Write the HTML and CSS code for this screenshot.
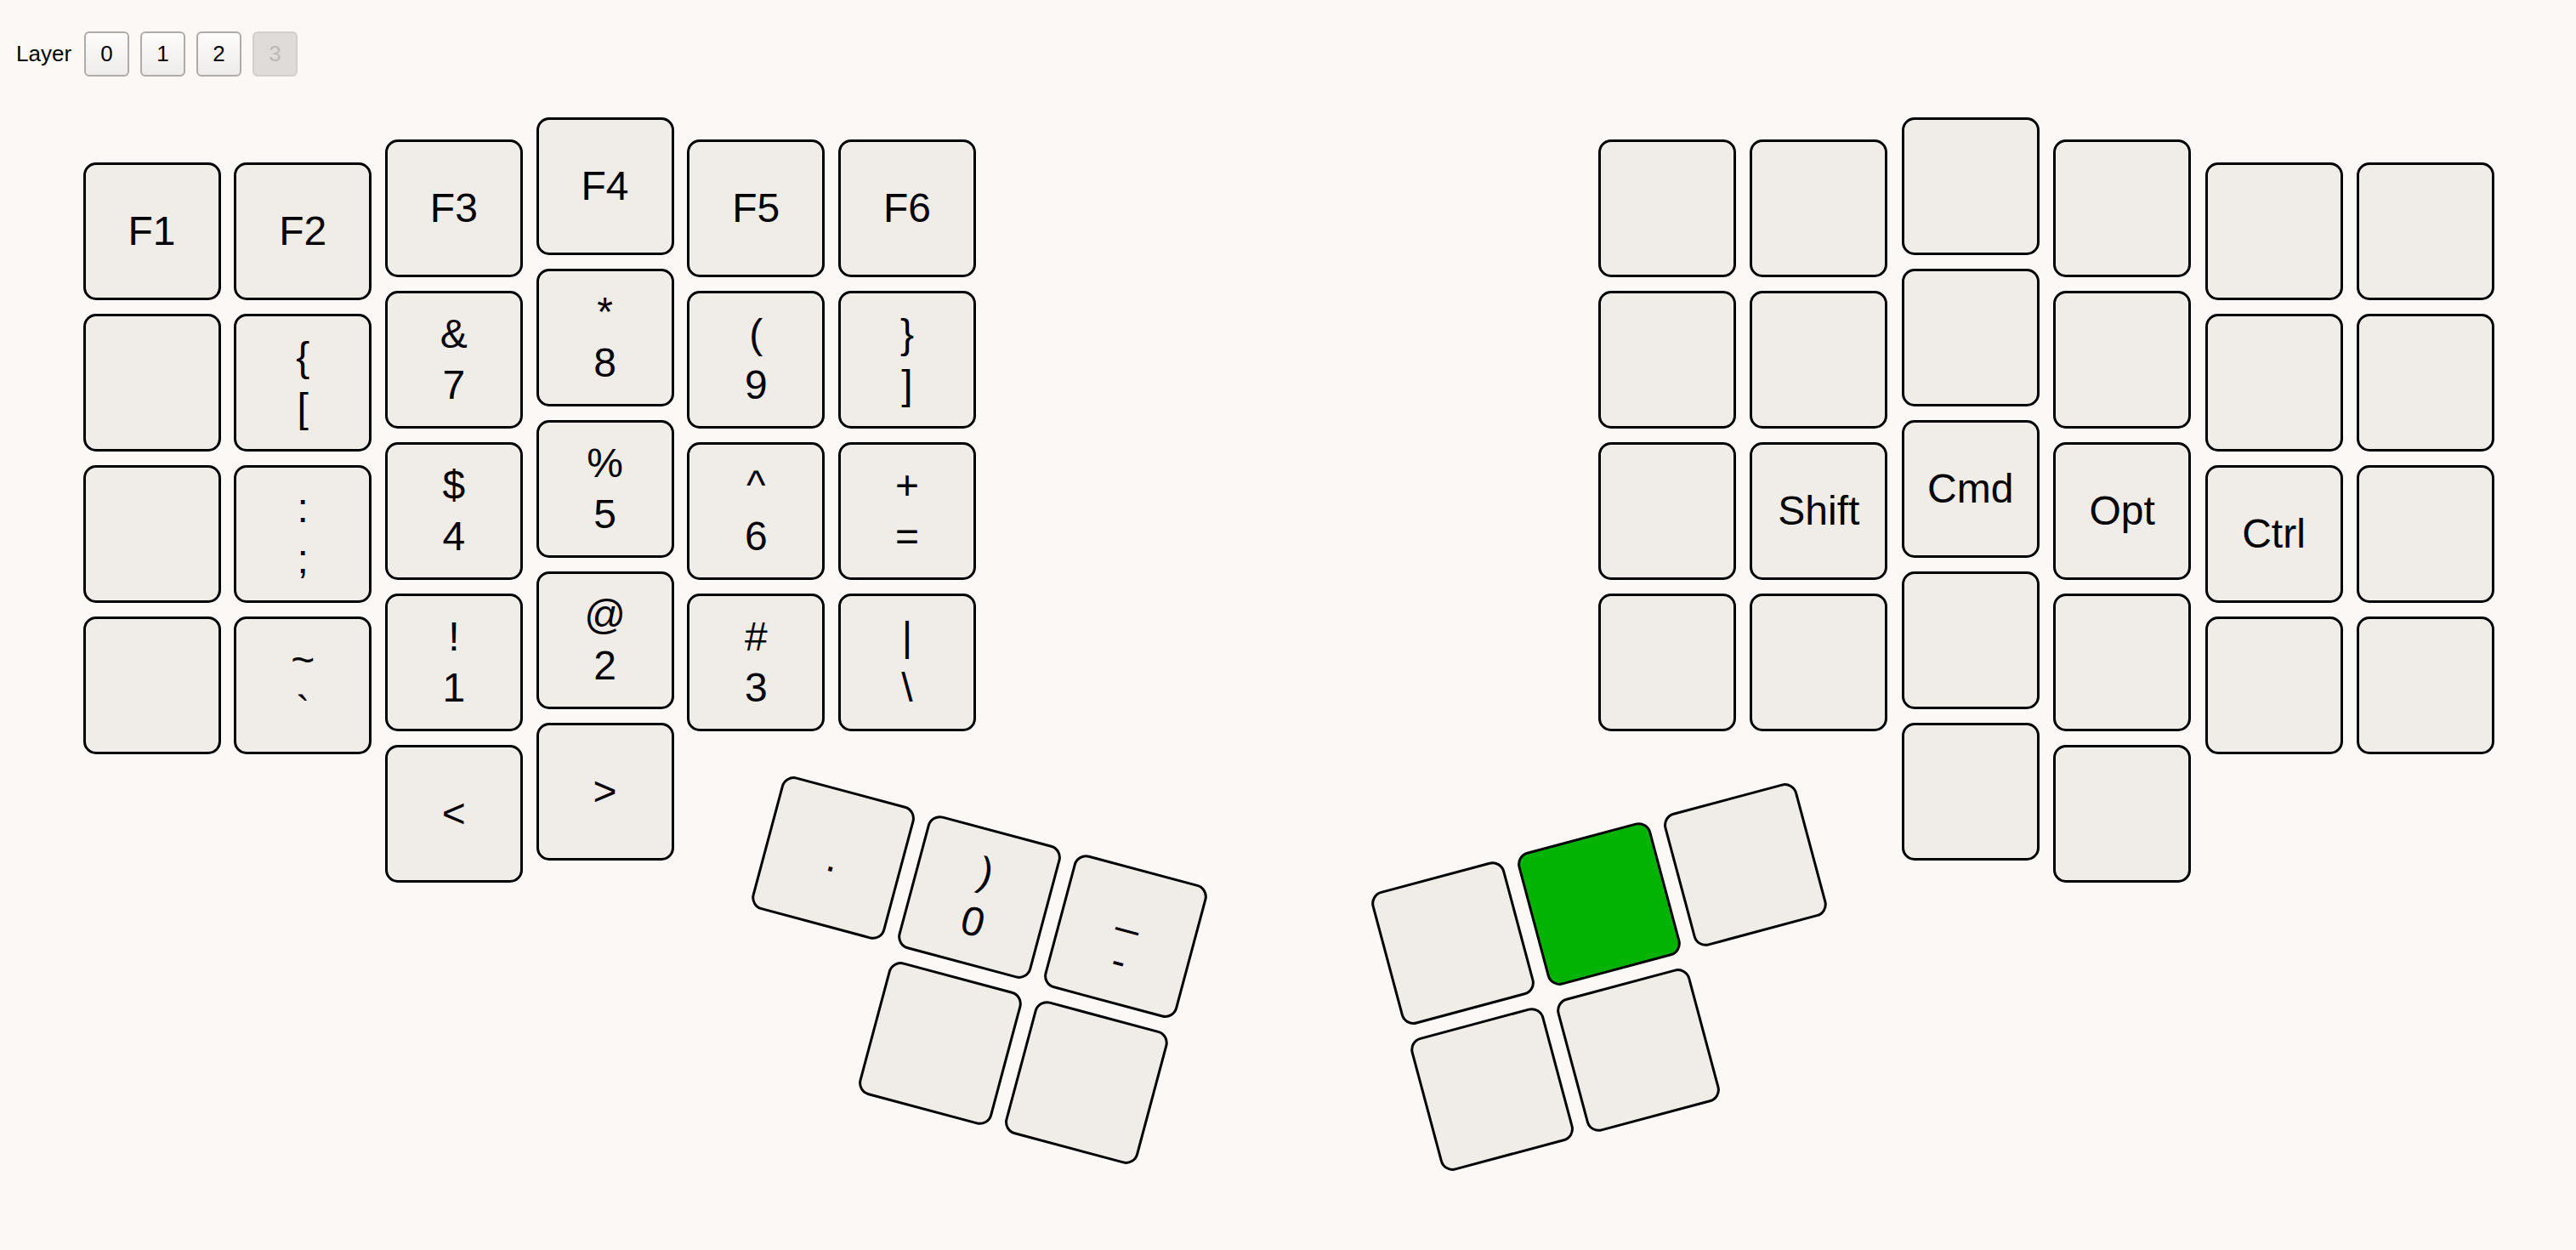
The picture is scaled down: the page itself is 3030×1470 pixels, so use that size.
FILE: index.html
```html
<!DOCTYPE html>
<html lang="en">
    <head>
        <meta charset="UTF-8" />
        <meta name="viewport" content="width=device-width, initial-scale=1.0" />
        <title>Keymap</title>
        <link rel="stylesheet" href="styles.css">
    </head>
    <body>
        <div class="toolbar">
            <span class="toolbar-label">Layer</span>
            <button class="layer-btn">0</button>
            <button class="layer-btn">1</button>
            <button class="layer-btn">2</button>
            <button class="layer-btn" disabled>3</button>
        </div>

        <div class="board">
            <!-- left half -->
            <div class="half">
                <div class="col low">
                    <div class="key"><span>F1</span></div>
                    <div class="key"></div>
                    <div class="key"></div>
                    <div class="key"></div>
                </div>
                <div class="col low">
                    <div class="key"><span>F2</span></div>
                    <div class="key"><span>{</span><span>[</span></div>
                    <div class="key"><span>:</span><span>;</span></div>
                    <div class="key"><span>~</span><span>`</span></div>
                </div>
                <div class="col mid">
                    <div class="key"><span>F3</span></div>
                    <div class="key"><span>&amp;</span><span>7</span></div>
                    <div class="key"><span>$</span><span>4</span></div>
                    <div class="key"><span>!</span><span>1</span></div>
                    <div class="key"><span>&lt;</span></div>
                </div>
                <div class="col">
                    <div class="key"><span>F4</span></div>
                    <div class="key"><span>*</span><span>8</span></div>
                    <div class="key"><span>%</span><span>5</span></div>
                    <div class="key"><span>@</span><span>2</span></div>
                    <div class="key"><span>&gt;</span></div>
                </div>
                <div class="col mid">
                    <div class="key"><span>F5</span></div>
                    <div class="key"><span>(</span><span>9</span></div>
                    <div class="key"><span>^</span><span>6</span></div>
                    <div class="key"><span>#</span><span>3</span></div>
                </div>
                <div class="col mid">
                    <div class="key"><span>F6</span></div>
                    <div class="key"><span>}</span><span>]</span></div>
                    <div class="key"><span>+</span><span>=</span></div>
                    <div class="key"><span>|</span><span>\</span></div>
                </div>
            </div>

            <!-- right half -->
            <div class="half half-right">
                <div class="col mid">
                    <div class="key"></div>
                    <div class="key"></div>
                    <div class="key"></div>
                    <div class="key"></div>
                </div>
                <div class="col mid">
                    <div class="key"></div>
                    <div class="key"></div>
                    <div class="key"><span>Shift</span></div>
                    <div class="key"></div>
                </div>
                <div class="col">
                    <div class="key"></div>
                    <div class="key"></div>
                    <div class="key"><span>Cmd</span></div>
                    <div class="key"></div>
                    <div class="key"></div>
                </div>
                <div class="col mid">
                    <div class="key"></div>
                    <div class="key"></div>
                    <div class="key"><span>Opt</span></div>
                    <div class="key"></div>
                    <div class="key"></div>
                </div>
                <div class="col low">
                    <div class="key"></div>
                    <div class="key"></div>
                    <div class="key"><span>Ctrl</span></div>
                    <div class="key"></div>
                </div>
                <div class="col low">
                    <div class="key"></div>
                    <div class="key"></div>
                    <div class="key"></div>
                    <div class="key"></div>
                </div>
            </div>

            <!-- thumb clusters -->
            <div class="thumbs thumbs-left">
                <div class="key"><span>.</span></div>
                <div class="key"><span>)</span><span>0</span></div>
                <div class="key"><span>_</span><span>-</span></div>
                <div class="key skip"></div>
                <div class="key"></div>
            </div>

            <div class="thumbs thumbs-right">
                <div class="key"></div>
                <div class="key active"></div>
                <div class="key"></div>
                <div class="key"></div>
                <div class="key"></div>
            </div>
        </div>
    </body>
</html>
```

FILE: styles.css
```css
body {
    font-family: "Liberation Sans", Arial, Helvetica, sans-serif;
    background: #fbf8f5;
    color: #000;
    margin: 0;
    min-height: 100vh;
}

/* layer switcher */
.toolbar {
    display: flex;
    align-items: center;
    gap: 13px;
    padding: 37px 0 0 19px;
    height: 53px;
}

.toolbar-label {
    font-size: 26px;
    margin-right: 2px;
}

.layer-btn {
    width: 53px;
    height: 53px;
    padding: 0;
    font-family: inherit;
    font-size: 26px;
    color: #000;
    background: linear-gradient(#fdfcfb, #eeecea);
    border: 2px solid #aeaba8;
    border-radius: 6px;
}

.layer-btn:disabled {
    background: #dedbd8;
    border-color: #d2cfcc;
    color: #bdbab7;
}

/* keyboard */
.board {
    position: relative;
    display: flex;
    gap: 732px;
    padding: 47.5px 0 0 97.5px;
    height: 1200px;
}

.half {
    display: flex;
    align-items: flex-start;
    gap: 15.7px;
}

.half-right {
    gap: 16.4px;
}

.col {
    display: flex;
    flex-direction: column;
    gap: 16px;
}

.col.mid {
    padding-top: 26.7px;
}

.col.low {
    padding-top: 53.4px;
}

.key {
    width: 162px;
    height: 162px;
    box-sizing: border-box;
    border: 3px solid #000;
    border-radius: 15px;
    background: #f0ece8;
    display: flex;
    flex-direction: column;
    justify-content: center;
    align-items: center;
    font-size: 48px;
    line-height: 60px;
}

.key.active {
    background: #02b302;
}

.thumbs {
    position: absolute;
    display: grid;
    grid-template-columns: repeat(3, 162px);
    grid-template-rows: repeat(2, 162px);
    gap: 16px;
}

.thumbs-left {
    left: 869.7px;
    top: 881.3px;
    transform: rotate(15deg);
}

.thumbs-left .skip {
    grid-column: 2;
}

.thumbs-right {
    left: 1644.5px;
    top: 888.7px;
    transform: rotate(-15deg);
}
```
